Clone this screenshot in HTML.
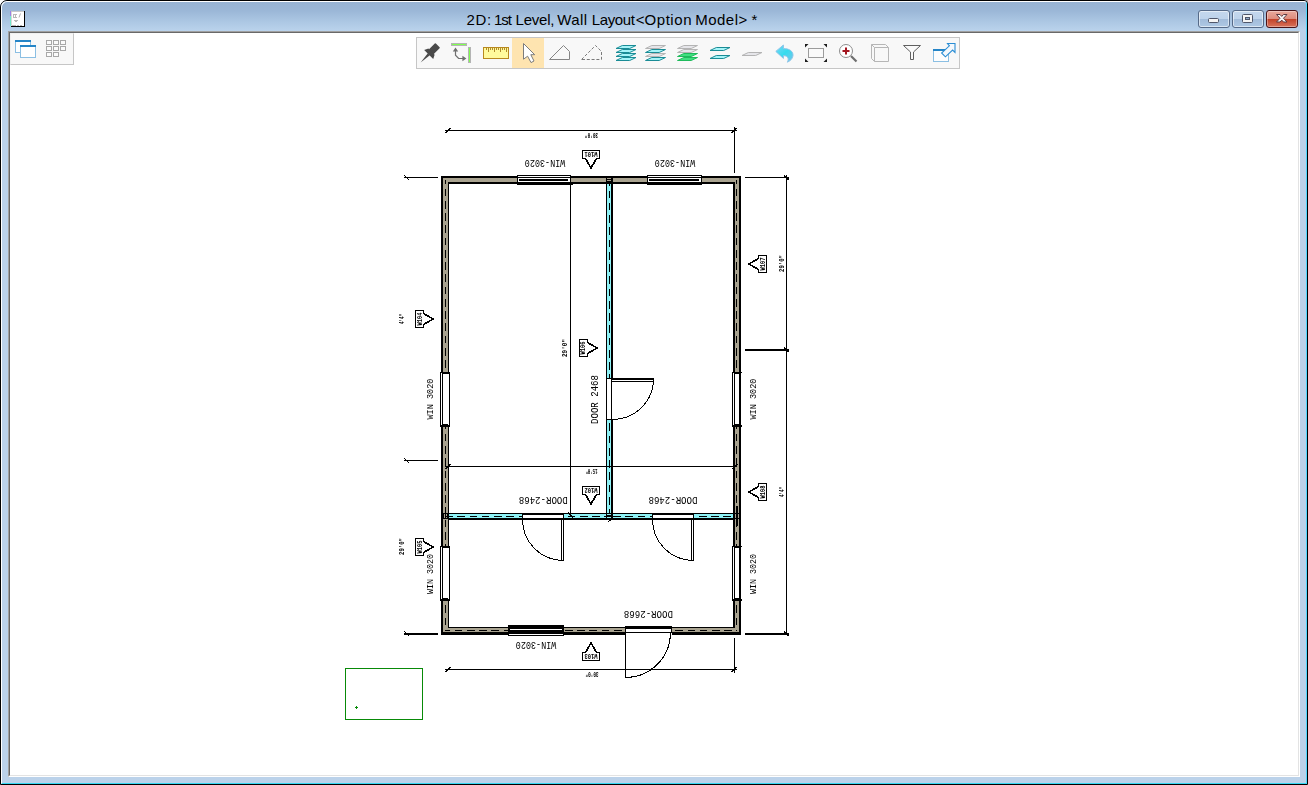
<!DOCTYPE html><html><head><meta charset="utf-8"><title>2D: 1st Level, Wall Layout</title><style>
html,body{margin:0;padding:0;}
body{width:1308px;height:785px;overflow:hidden;background:#fff;position:relative;font-family:"Liberation Sans",sans-serif;}
#corner{position:absolute;right:0;top:0;width:6px;height:6px;background:#b4b4b4;}
#win{position:absolute;left:0;top:0;width:1308px;height:785px;box-sizing:border-box;background:#bbd2ea;border:1px solid #000;border-radius:7px 4px 0 0;overflow:hidden;}
#hl{position:absolute;left:0;top:0;right:0;bottom:0;border-left:1px solid #fff;border-top:1px solid #fff;border-right:1px solid #4fd8ff;border-bottom:1px solid #35d8f2;border-radius:6px 3px 0 0;z-index:5;}
#tb{position:absolute;left:1px;top:1px;right:1px;height:29px;background:linear-gradient(#98b3d3 0%,#9bb7d7 30%,#adc8e4 70%,#bad3ec 100%);border-radius:5px 2px 0 0;}
#title{position:absolute;left:-1px;top:10px;font-size:15px;line-height:17px;color:#000;white-space:pre;}
#title span{position:absolute;top:0;}
#content{position:absolute;left:7px;top:30px;width:1292px;height:746px;background:#fff;box-sizing:border-box;border-left:1px solid #a0a0a0;border-top:1px solid #a0a0a0;border-right:1px solid #fff;border-bottom:1px solid #fff;}
#content:before{content:"";position:absolute;left:0;top:0;right:0;bottom:0;border-left:1px solid #696969;border-top:1px solid #696969;border-right:1px solid #e3e3e3;border-bottom:1px solid #e3e3e3;}
.cb{position:absolute;top:9px;height:18px;width:32px;box-sizing:border-box;border:1px solid #566a88;border-radius:3px;background:linear-gradient(#c4d7ed 0%,#bed3eb 48%,#a2bcda 52%,#aec8e4 100%);box-shadow:inset 0 0 0 1px rgba(255,255,255,.55);}
.cb.close{border-color:#4a1418;background:linear-gradient(#e9a99c 0%,#dd8d7e 48%,#c2432a 52%,#d8735c 100%);box-shadow:inset 0 0 0 1px rgba(255,255,255,.35);}
.bar{position:absolute;background:#f8f8f8;border:1px solid #c6c6c6;box-sizing:border-box;}
svg{position:absolute;left:-1px;top:-1px;overflow:visible;}
</style></head><body>
<div id="corner"></div><div id="win"><div id="hl"></div>
<div id="tb"></div>
<div id="title"><span style="left:466.6px;letter-spacing:0.6px">2D: </span><span style="left:493.9px;letter-spacing:-1.0px">1st </span><span style="left:515.5px;letter-spacing:-0.2px">Level, </span><span style="left:557.2px;letter-spacing:0.4px">Wall </span><span style="left:591.7px;letter-spacing:-0.36px">Layout</span><span style="left:635.7px;letter-spacing:0px">&lt;</span><span style="left:644.5px;letter-spacing:0.56px">Option </span><span style="left:695.2px;letter-spacing:0.5px">Model</span><span style="left:738.4px;letter-spacing:0px">&gt; </span><span style="left:751.5px;letter-spacing:0px">*</span></div>
<div class="cb" style="left:1197px"></div><div class="cb" style="left:1231px"></div><div class="cb close" style="left:1265px"></div>
<div id="content"></div>
<div class="bar" style="left:9px;top:32px;width:64px;height:32px;border-left-color:#f0f0f0;border-top-color:#f0f0f0"></div>
<div class="bar" style="left:415px;top:36px;width:544px;height:32px"><div style="position:absolute;left:95px;top:0;width:32px;height:30px;background:#fee4b0"></div></div>
<svg width="1308" height="785" viewBox="0 0 1308 785" style="z-index:3">
<defs><linearGradient id="ug" x1="0" y1="0" x2="1" y2="1"><stop offset="0" stop-color="#7fd4f4"/><stop offset=".5" stop-color="#35dcee"/><stop offset="1" stop-color="#7cc4ea"/></linearGradient></defs>
<g shape-rendering="crispEdges"><rect x="11" y="11" width="14" height="16" fill="#000"/><rect x="11" y="11" width="13" height="15" fill="#fff"/><rect x="11" y="11" width="13" height="1" fill="#c8c8c8"/><rect x="10" y="11" width="1" height="5" fill="#9b80e6"/><rect x="10" y="16" width="1" height="10" fill="#70e8cc"/><rect x="11" y="12" width="1" height="14" fill="#d8d8d8"/>
<path d="M13.5 14V18 M15.5 14V18 M13 14.5H17 M13 17.5H17 M14 20.5H18 M15 21.5H17 M12 25.5H16 M17 25.5H19 M20 25.5H22" stroke="#b8b8b8" fill="none"/></g>
<path d="M19 17.5L20.5 13.5" stroke="#b0b0b0" fill="none"/>
<rect x="1208.5" y="18.5" width="10" height="4" rx="1" fill="#f4f4f4" stroke="#4f566a"/>
<rect x="1242.5" y="14.5" width="10" height="8" rx="1" fill="#f4f4f4" stroke="#4f566a"/><rect x="1245.5" y="17.5" width="4" height="2" fill="#8fa9c9" stroke="#4f566a"/>
<path d="M1276.5 14.5H1280L1281.75 16.4L1283.5 14.5H1287L1283.5 18.25L1287 22H1283.5L1281.75 20.1L1280 22H1276.5L1280 18.25Z" fill="#f6f6f6" stroke="#5c3c44" stroke-width="1" stroke-linejoin="round"/>
<g shape-rendering="crispEdges">
<rect x="15.5" y="40.5" width="15" height="12" fill="#fff" stroke="#8bbfe3"/><rect x="15" y="40" width="16" height="2" fill="#2585c7"/>
<rect x="20.5" y="45.5" width="15" height="12" fill="#fff" stroke="#8bbfe3"/><rect x="20" y="45" width="16" height="2" fill="#2585c7"/>
<rect x="46.5" y="40.5" width="5" height="4" fill="#fbfbfb" stroke="#a8a8a8"/>
<rect x="53.5" y="40.5" width="5" height="4" fill="#fbfbfb" stroke="#a8a8a8"/>
<rect x="60.5" y="40.5" width="5" height="4" fill="#fbfbfb" stroke="#a8a8a8"/>
<rect x="46.5" y="46.5" width="5" height="4" fill="#fbfbfb" stroke="#a8a8a8"/>
<rect x="53.5" y="46.5" width="5" height="4" fill="#fbfbfb" stroke="#a8a8a8"/>
<rect x="60.5" y="46.5" width="5" height="4" fill="#fbfbfb" stroke="#a8a8a8"/>
<rect x="46.5" y="52.5" width="5" height="4" fill="#fbfbfb" stroke="#a8a8a8"/>
<rect x="53.5" y="52.5" width="5" height="4" fill="#fbfbfb" stroke="#a8a8a8"/>
</g>
<g transform="translate(431.8 51.3) rotate(45)" fill="#4a4a4a"><rect x="-3.4" y="-8.4" width="6.8" height="9.4" rx="0.8"/><path d="M-4.4 0.4H4.4L6.4 4.4H-6.4Z"/><path d="M-1.4 4.2L0 15.8L1.4 4.2Z"/></g>
<g shape-rendering="crispEdges"><rect x="451.5" y="43.5" width="15" height="2" fill="#80ff50" stroke="#b4b4b4"/><rect x="468.5" y="47.5" width="2" height="15" fill="#80ff50" stroke="#b4b4b4"/></g>
<path d="M455.5 50V55.2L458.6 58.5H463" stroke="#707070" stroke-width="1.2" fill="none"/><path d="M452.8 51.6L455.5 47.6L458.2 51.6Z M462.4 55.8L466.4 58.5L462.4 61.2Z" fill="#707070"/>
<g shape-rendering="crispEdges"><rect x="483.5" y="47.5" width="25" height="11" fill="#fffa9c" stroke="#b8891f"/>
<path d="M486.5 48V50 M488.5 48V52 M490.5 48V50 M492.5 48V50 M494.5 48V52 M496.5 48V50 M498.5 48V50 M500.5 48V52 M502.5 48V50 M504.5 48V50 M506.5 48V52" stroke="#b08a2a" fill="none"/></g>
<path d="M523.5 43.5V59.2L527.6 56.2L531 62.6L534 61L530.8 54.7H534.7Z" fill="#fff" stroke="#7c7c7c" stroke-width="1"/>
<path d="M549.5 59.5L563.5 45.5L569.5 51.5V59.5Z" fill="none" stroke="#858585"/>
<path d="M581.5 59.5L595.5 45.5L601.5 51.5V59.5Z" fill="none" stroke="#7a7a7a" stroke-dasharray="3 1.8"/>
<path d="M622.3 45.5H636L629.7 48.5H616Z" fill="#a6f4f8" stroke="#1a8c96" stroke-width="1"/>
<path d="M622.3 49.5H636L629.7 52.5H616Z" fill="#a6f4f8" stroke="#1a8c96" stroke-width="1"/>
<path d="M622.3 53.5H636L629.7 56.5H616Z" fill="#a6f4f8" stroke="#1a8c96" stroke-width="1"/>
<path d="M622.3 57.5H636L629.7 60.5H616Z" fill="#a6f4f8" stroke="#1a8c96" stroke-width="1"/>
<path d="M651.8 45.5H665.5L659.2 48.5H645.5Z" fill="#e6e6ea" stroke="#b4b4b4" stroke-width="1"/>
<path d="M651.8 49.5H665.5L659.2 52.5H645.5Z" fill="#a6f4f8" stroke="#1a8c96" stroke-width="1"/>
<path d="M651.8 53.5H665.5L659.2 56.5H645.5Z" fill="#e6e6ea" stroke="#b4b4b4" stroke-width="1"/>
<path d="M651.8 57.5H665.5L659.2 60.5H645.5Z" fill="#a6f4f8" stroke="#1a8c96" stroke-width="1"/>
<path d="M683.8 45.5H697.5L691.2 48.5H677.5Z" fill="#e6e6ea" stroke="#b4b4b4" stroke-width="1"/>
<path d="M683.8 49.5H697.5L691.2 52.5H677.5Z" fill="#e6e6ea" stroke="#b4b4b4" stroke-width="1"/>
<path d="M683.8 53.5H697.5L691.2 56.5H677.5Z" fill="#40e080" stroke="#1fba5c" stroke-width="1"/>
<path d="M683.8 57.5H697.5L691.2 60.5H677.5Z" fill="#40e080" stroke="#1fba5c" stroke-width="1"/>
<path d="M716.3 47.5H730L723.7 50.5H710Z" fill="#a6f4f8" stroke="#1a8c96" stroke-width="1"/>
<path d="M716.3 55.5H730L723.7 58.5H710Z" fill="#a6f4f8" stroke="#1a8c96" stroke-width="1"/>
<path d="M748.3 52.5H762L755.7 55.5H742Z" fill="#e6e6ea" stroke="#b4b4b4" stroke-width="1"/>
<path d="M775.8 51.4L783.4 45V48.6C789.5 48.4 793.4 51.6 793 55.6C792.6 58.8 790.4 60.8 787.4 62.2C789 59.4 788.6 55.8 783.4 55.6V58.4Z" fill="url(#ug)" stroke="#8dc4e8" stroke-width="1"/>
<g shape-rendering="crispEdges"><rect x="808.5" y="48.5" width="15" height="9" fill="#fafafa" stroke="#9c9c9c"/></g>
<path d="M805 44H808.5L805 47.5Z M827 44H823.5L827 47.5Z M805 62H808.5L805 58.5Z M827 62H823.5L827 58.5Z" fill="#1c1c1c"/>
<path d="M851 56L856.5 61.5" stroke="#6e6e6e" stroke-width="2.2" fill="none"/><circle cx="846" cy="51" r="6.5" fill="#fff" stroke="#8c8c8c"/><path d="M842.5 51H849.5M846 47.5V54.5" stroke="#a3151f" stroke-width="2" fill="none"/>
<path d="M874.5 47.5H888.5V61.5H874.5Z M871.5 44.5H885.5L888.5 47.5 M871.5 44.5V58.5L874.5 61.5 M871.5 44.5L874.5 47.5" fill="none" stroke="#b6b6b6"/>
<path d="M903.5 45.5H920.5L913.5 52V59.5H910.5V52Z" fill="#fafafa" stroke="#606060"/>
<g shape-rendering="crispEdges"><rect x="933.5" y="49.5" width="15" height="12" fill="#fdfdfd" stroke="#8bbfe3"/><rect x="933" y="49" width="16" height="2" fill="#2585c7"/></g>
<path d="M947.5 43.5H955V52.4L952.6 50L945.4 56.8L941.6 53L949.4 45.8Z" fill="#f4f8fc" stroke="#2a8dd4" stroke-width="1.1"/>
</svg>
<svg width="1308" height="785" viewBox="0 0 1308 785" style="z-index:2;will-change:transform">
<g shape-rendering="crispEdges" fill="none" stroke="#000" stroke-width="1">
<rect x="441" y="176" width="300" height="459" fill="#000" stroke="none"/>
<rect x="443" y="178" width="296" height="454" fill="#a9a390" stroke="none"/>
<rect x="448" y="182" width="287" height="446" fill="#000" stroke="none"/>
<rect x="449" y="184" width="284" height="443" fill="#fff" stroke="none"/>
<path d="M445.5 180V631 M736.5 180V631" stroke-dasharray="7.7 4.56" stroke-dashoffset="3.7"/>
<path d="M446 630.5H737" stroke-dasharray="7.7 4.56" stroke-dashoffset="3.7"/>
<rect x="606" y="184" width="7" height="330" fill="#8ff2f6" stroke="none"/>
<rect x="606" y="178" width="1" height="342" fill="#000" stroke="none"/>
<rect x="611" y="178" width="2" height="342" fill="#000" stroke="none"/>
<rect x="449" y="513" width="284" height="7" fill="#8ff2f6" stroke="none"/>
<rect x="443" y="513" width="296" height="1" fill="#000" stroke="none"/>
<rect x="443" y="518" width="296" height="1" fill="#000" stroke="none"/>
<rect x="448" y="519" width="287" height="1" fill="#000" stroke="none"/>
<rect x="443" y="514" width="1" height="4" fill="#000" stroke="none"/><rect x="445" y="514" width="1" height="4" fill="#000" stroke="none"/><rect x="447" y="514" width="1" height="4" fill="#000" stroke="none"/>
<rect x="736" y="506" width="2" height="20" fill="#000" stroke="none"/>
<rect x="606" y="513" width="1" height="7" fill="#000" stroke="none"/><rect x="611" y="513" width="2" height="7" fill="#000" stroke="none"/>
<rect x="607" y="514" width="4" height="4" fill="#8ff2f6" stroke="none"/><rect x="607" y="515" width="4" height="2" fill="#000" stroke="none"/>
<rect x="609" y="520" width="2" height="1" fill="#000" stroke="none"/><rect x="608" y="521" width="1" height="1" fill="#000" stroke="none"/>
<path d="M607 179.5H611 M607 181.5H611"/>
<path d="M609.5 184V513" stroke-dasharray="7.7 4.56" stroke-dashoffset="5.76"/>
<path d="M445 516.5H606 M613 516.5H733" stroke-dasharray="7.7 4.56"/>
<rect x="517" y="175" width="54" height="10" fill="#000" stroke="none"/>
<rect x="518" y="176" width="52" height="1" fill="#fff" stroke="none"/>
<rect x="518" y="178" width="52" height="4" fill="#fff" stroke="none"/>
<rect x="519" y="179" width="49" height="2" fill="#000" stroke="none"/>
<rect x="571" y="184" width="2" height="1" fill="#000" stroke="none"/>
<rect x="647" y="175" width="55" height="10" fill="#000" stroke="none"/>
<rect x="648" y="176" width="53" height="1" fill="#fff" stroke="none"/>
<rect x="648" y="178" width="53" height="4" fill="#fff" stroke="none"/>
<rect x="649" y="179" width="50" height="2" fill="#000" stroke="none"/>
<rect x="508" y="625" width="56" height="11" fill="#000" stroke="none"/>
<rect x="510" y="629" width="52" height="1" fill="#fff" stroke="none"/>
<rect x="509" y="634" width="54" height="1" fill="#fff" stroke="none"/>
<rect x="440.5" y="372.5" width="9" height="54" fill="#fff"/>
<path d="M442.5 372V426 M442 373.5H449 M440 425.5H450 M442 424.5H448"/>
<rect x="440.5" y="546.5" width="9" height="54" fill="#fff"/>
<path d="M442.5 546V600 M442 547.5H449 M440 599.5H450 M442 598.5H448"/>
<rect x="732.5" y="372.5" width="7" height="54" fill="#fff"/>
<path d="M734.5 372V426 M732 372.5H742 M734 373.5H740 M732 425.5H742 M732 426.5H742 M734 424.5H740"/>
<rect x="732.5" y="546.5" width="7" height="54" fill="#fff"/>
<path d="M734.5 546V600 M732 546.5H742 M734 547.5H740 M732 599.5H742 M732 600.5H742 M734 598.5H740"/>
<rect x="606" y="378" width="7" height="42" fill="#fff" stroke="none"/>
<rect x="606.5" y="378.5" width="5" height="41" fill="#fff"/>
<rect x="611.5" y="378.5" width="42" height="3" fill="#fff"/>
<path d="M611 379H654" stroke-width="2"/>
<path d="M653.5 382A41 41 0 0 1 612 419.5"/>
<rect x="522.5" y="513.5" width="41" height="6" fill="#fff"/>
<path d="M522 514H564 M522 519H564" stroke-width="2"/>
<rect x="561.5" y="519.5" width="2" height="41" fill="#fff"/>
<path d="M522.5 520A41 41 0 0 0 562 560.5"/>
<rect x="652.5" y="513.5" width="41" height="6" fill="#fff"/>
<path d="M652 514H694 M652 519H694" stroke-width="2"/>
<rect x="691.5" y="519.5" width="2" height="41" fill="#fff"/>
<path d="M652.5 520A41 41 0 0 0 692 560.5"/>
<rect x="625" y="626" width="47" height="9" fill="#fff" stroke="none"/>
<rect x="625" y="626" width="47" height="3" fill="#000" stroke="none"/>
<path d="M625 632.5H672 M625.5 626V678 M671.5 629V633"/>
<path d="M625.5 677.5A45 45 0 0 0 670.5 633"/>
<path d="M445 130.5H737 M734.5 127V173 M445 669.5H737 M734.5 638V673"/>
<path d="M404 177.5H438 M404 460.5H438 M745 177.5H789 M786.5 175V635"/>
<path d="M404 633.5H438 M745 633.5H789 M745 349.5H789" stroke-width="2"/>
<path d="M570.5 183V516 M445 466.5H737"/>
</g>
<g stroke="#000" stroke-width="1.2" fill="none" shape-rendering="crispEdges">
<path d="M445.5 133.0L450.5 128.0"/>
<path d="M731.5 133.0L736.5 128.0"/>
<path d="M445.5 672.0L450.5 667.0"/>
<path d="M731.5 672.0L736.5 667.0"/>
<path d="M404.0 175.0L409.0 180.0"/>
<path d="M404.0 458.0L409.0 463.0"/>
<path d="M404.0 631.0L409.0 636.0"/>
<path d="M568.0 512.5L573.0 517.5"/>
<path d="M445.5 469.0L450.5 464.0"/>
<path d="M732.5 469.0L737.5 464.0"/>
<path d="M784.5 175.5L785.5 177.5 M787 175.5L786.5 177.5 M787 179.0H789"/>
<path d="M784.5 347.5L785.5 349.5 M787 347.5L786.5 349.5 M787 351.0H789"/>
<path d="M784.5 631.5L785.5 633.5 M787 631.5L786.5 633.5 M787 635.0H789"/>
</g>
<g shape-rendering="crispEdges" fill="#fff" stroke="#000" stroke-width="1">
<path d="M582.5 150.5H599.5V158.5H597L591 168.5L585 158.5H582.5Z"/>
<path d="M596.5 158.5L591 168.0L585.5 158.5" fill="none" stroke-width="1.6"/>
<path d="M582.5 486.5H599.5V494.5H597L591 504.5L585 494.5H582.5Z"/>
<path d="M596.5 494.5L591 504.0L585.5 494.5" fill="none" stroke-width="1.6"/>
<path d="M582.5 660.5H599.5V652.5H597L591 642.5L585 652.5H582.5Z"/>
<path d="M596.5 652.5L591 643.0L585.5 652.5" fill="none" stroke-width="1.6"/>
<path d="M415.5 310.5V327.5H423.5V325L433.5 319L423.5 313V310.5Z"/>
<path d="M423.5 324.5L433.0 319L423.5 313.5" fill="none" stroke-width="1.6"/>
<path d="M415.5 538.5V555.5H423.5V553L433.5 547L423.5 541V538.5Z"/>
<path d="M423.5 552.5L433.0 547L423.5 541.5" fill="none" stroke-width="1.6"/>
<path d="M579.5 339.5V356.5H587.5V354L597.5 348L587.5 342V339.5Z"/>
<path d="M587.5 353.5L597.0 348L587.5 342.5" fill="none" stroke-width="1.6"/>
<path d="M766.5 255.5V272.5H758.5V270L748.5 264L758.5 258V255.5Z"/>
<path d="M758.5 269.5L749.0 264L758.5 258.5" fill="none" stroke-width="1.6"/>
<path d="M766.5 483.5V500.5H758.5V498L748.5 492L758.5 486V483.5Z"/>
<path d="M758.5 497.5L749.0 492L758.5 486.5" fill="none" stroke-width="1.6"/>
</g>
<g font-family="Liberation Sans, sans-serif" fill="#000" text-anchor="middle">
<text transform="translate(545 163.7) rotate(180)" font-family="Liberation Mono, monospace" font-size="11.21" y="3.70" textLength="40.5" lengthAdjust="spacingAndGlyphs" font-weight="normal">WIN-3020</text>
<text transform="translate(675 163.7) rotate(180)" font-family="Liberation Mono, monospace" font-size="11.21" y="3.70" textLength="40.5" lengthAdjust="spacingAndGlyphs" font-weight="normal">WIN-3020</text>
<text transform="translate(536 645.7) rotate(180)" font-family="Liberation Mono, monospace" font-size="11.21" y="3.70" textLength="40.5" lengthAdjust="spacingAndGlyphs" font-weight="normal">WIN-3020</text>
<text transform="translate(543.3 500.2) rotate(180)" font-family="Liberation Mono, monospace" font-size="10.91" y="3.60" textLength="49" lengthAdjust="spacingAndGlyphs" font-weight="normal">DOOR-2468</text>
<text transform="translate(673 500.2) rotate(180)" font-family="Liberation Mono, monospace" font-size="10.91" y="3.60" textLength="49" lengthAdjust="spacingAndGlyphs" font-weight="normal">DOOR-2468</text>
<text transform="translate(648.4 614.5) rotate(180)" font-family="Liberation Mono, monospace" font-size="10.61" y="3.50" textLength="49" lengthAdjust="spacingAndGlyphs" font-weight="normal">DOOR-2668</text>
<text transform="translate(430 399) rotate(-90)" font-family="Liberation Mono, monospace" font-size="9.09" y="3.00" textLength="41" lengthAdjust="spacingAndGlyphs" font-weight="normal">WIN 3020</text>
<text transform="translate(430 574) rotate(-90)" font-family="Liberation Mono, monospace" font-size="9.09" y="3.00" textLength="40" lengthAdjust="spacingAndGlyphs" font-weight="normal">WIN 3020</text>
<text transform="translate(752.5 399) rotate(-90)" font-family="Liberation Mono, monospace" font-size="9.09" y="3.00" textLength="41" lengthAdjust="spacingAndGlyphs" font-weight="normal">WIN 3020</text>
<text transform="translate(752.5 574) rotate(-90)" font-family="Liberation Mono, monospace" font-size="9.09" y="3.00" textLength="40" lengthAdjust="spacingAndGlyphs" font-weight="normal">WIN 3020</text>
<text transform="translate(594.5 399.5) rotate(-90)" font-family="Liberation Mono, monospace" font-size="10.61" y="3.50" textLength="49" lengthAdjust="spacingAndGlyphs" font-weight="normal">DOOR 2468</text>
<text transform="translate(591.5 135.5) rotate(180)" font-family="Liberation Mono, monospace" font-size="7.58" y="2.50" textLength="13" lengthAdjust="spacingAndGlyphs" font-weight="bold">30'0"</text>
<text transform="translate(592 674.5) rotate(180)" font-family="Liberation Mono, monospace" font-size="7.58" y="2.50" textLength="13" lengthAdjust="spacingAndGlyphs" font-weight="bold">30'0"</text>
<text transform="translate(591.5 471.5) rotate(180)" font-family="Liberation Mono, monospace" font-size="7.58" y="2.50" textLength="12" lengthAdjust="spacingAndGlyphs" font-weight="bold">15'0"</text>
<text transform="translate(401.5 319) rotate(-90)" font-family="Liberation Mono, monospace" font-size="7.58" y="2.50" textLength="10" lengthAdjust="spacingAndGlyphs" font-weight="bold">4'4"</text>
<text transform="translate(401.5 546.5) rotate(-90)" font-family="Liberation Mono, monospace" font-size="7.58" y="2.50" textLength="17" lengthAdjust="spacingAndGlyphs" font-weight="bold">29'0"</text>
<text transform="translate(565 348) rotate(-90)" font-family="Liberation Mono, monospace" font-size="6.82" y="2.25" textLength="18" lengthAdjust="spacingAndGlyphs" font-weight="bold">29'0"</text>
<text transform="translate(781.5 263.5) rotate(-90)" font-family="Liberation Mono, monospace" font-size="7.58" y="2.50" textLength="17" lengthAdjust="spacingAndGlyphs" font-weight="bold">29'0"</text>
<text transform="translate(781.3 492) rotate(-90)" font-family="Liberation Mono, monospace" font-size="7.58" y="2.50" textLength="10" lengthAdjust="spacingAndGlyphs" font-weight="bold">4'4"</text>
<text transform="translate(591 154.5) rotate(180)" font-family="Liberation Mono, monospace" font-size="6.82" y="2.25" textLength="13" lengthAdjust="spacingAndGlyphs" font-weight="bold">W101</text>
<text transform="translate(591 490.5) rotate(180)" font-family="Liberation Mono, monospace" font-size="6.82" y="2.25" textLength="13" lengthAdjust="spacingAndGlyphs" font-weight="bold">W102</text>
<text transform="translate(591 656.5) rotate(180)" font-family="Liberation Mono, monospace" font-size="6.82" y="2.25" textLength="13" lengthAdjust="spacingAndGlyphs" font-weight="bold">W103</text>
<text transform="translate(419.5 319) rotate(-90)" font-family="Liberation Mono, monospace" font-size="7.58" y="2.50" textLength="13" lengthAdjust="spacingAndGlyphs" font-weight="bold">W104</text>
<text transform="translate(419.5 547) rotate(-90)" font-family="Liberation Mono, monospace" font-size="7.58" y="2.50" textLength="13" lengthAdjust="spacingAndGlyphs" font-weight="bold">W105</text>
<text transform="translate(583 348) rotate(-90)" font-family="Liberation Mono, monospace" font-size="6.82" y="2.25" textLength="13" lengthAdjust="spacingAndGlyphs" font-weight="bold">W106</text>
<text transform="translate(762.5 264) rotate(-90)" font-family="Liberation Mono, monospace" font-size="7.58" y="2.50" textLength="13" lengthAdjust="spacingAndGlyphs" font-weight="bold">W107</text>
<text transform="translate(762.5 492) rotate(-90)" font-family="Liberation Mono, monospace" font-size="7.58" y="2.50" textLength="13" lengthAdjust="spacingAndGlyphs" font-weight="bold">W108</text>
</g>
<g shape-rendering="crispEdges" fill="none" stroke="#088a08"><rect x="345.5" y="668.5" width="77" height="51"/><path d="M355 707.5H358 M356.5 706V709"/></g>
</svg>
</div></body></html>
